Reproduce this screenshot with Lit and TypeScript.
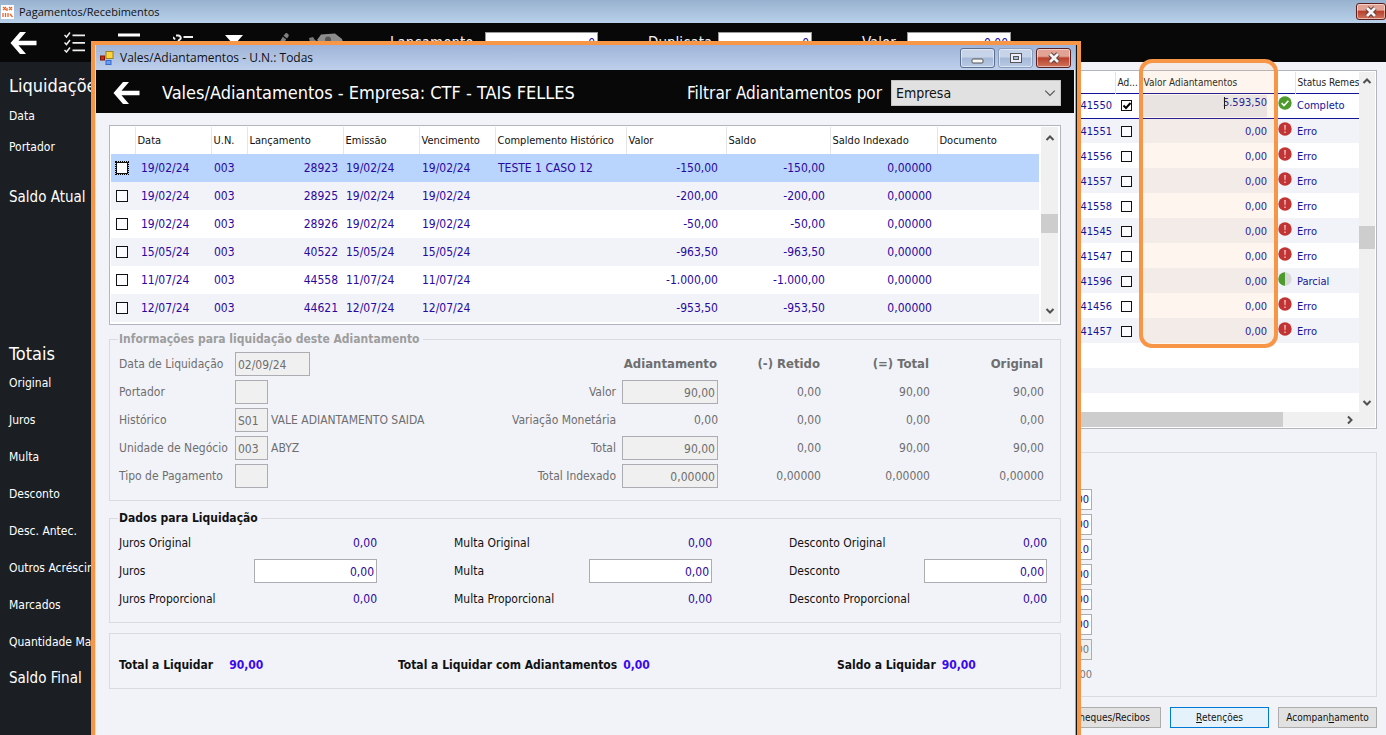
import { LitElement, html, css, svg, nothing } from 'lit';
import { customElement } from 'lit/decorators.js';
import { classMap } from 'lit/directives/class-map.js';

type Advance = {
  date: string; unit: string; entry: string; issued: string; due: string;
  note: string; value: string; balance: string; indexed: string;
};

const adv = (date: string, entry: string, value: string, note = ''): Advance => ({
  date, unit: '003', entry, issued: date, due: date, note, value, balance: value, indexed: '0,00000',
});

const ADVANCES: Advance[] = [
  adv('19/02/24', '28923', '-150,00', 'TESTE 1 CASO 12'),
  adv('19/02/24', '28925', '-200,00'),
  adv('19/02/24', '28926', '-50,00'),
  adv('15/05/24', '40522', '-963,50'),
  adv('11/07/24', '44558', '-1.000,00'),
  adv('12/07/24', '44621', '-953,50'),
];

const TITLES: [string, string, string][] = [
  ['41550', '5.593,50', 'Completo'],
  ['41551', '0,00', 'Erro'],
  ['41556', '0,00', 'Erro'],
  ['41557', '0,00', 'Erro'],
  ['41558', '0,00', 'Erro'],
  ['41545', '0,00', 'Erro'],
  ['41547', '0,00', 'Erro'],
  ['41596', '0,00', 'Parcial'],
  ['41456', '0,00', 'Erro'],
  ['41457', '0,00', 'Erro'],
];

const chevron = (d: string) => html`<svg width="10" height="10" viewBox="0 0 10 10" aria-hidden="true">
  <path d=${d} fill="none" stroke="#505050" stroke-width="2"></path></svg>`;
const UP = 'M1.5 7 L5 3.5 L8.5 7';
const DOWN = 'M1.5 3 L5 6.5 L8.5 3';
const RIGHT = 'M3 1.5 L6.5 5 L3 8.5';

const backArrow = html`<svg width="27" height="22" viewBox="0 0 27 22" aria-hidden="true">
  <path d="M10 0 H16 L8.5 8.7 H26.5 V13.3 H8.5 L16 22 H10 L0.5 11 Z" fill="#fff"></path></svg>`;

const closeGlyph = html`<svg width="14" height="12" viewBox="0 0 14 12" aria-hidden="true">
  <path d="M3 2 L11 10 M11 2 L3 10" stroke="#5b3a3a" stroke-width="4.6"></path>
  <path d="M3 2 L11 10 M11 2 L3 10" stroke="#f4f4f4" stroke-width="2.8"></path></svg>`;

const statusIcon = (s: string) => html`<svg class="status" width="14" height="14" viewBox="0 0 14 14" aria-hidden="true">
  ${s === 'Completo'
    ? svg`<circle cx="7" cy="7" r="6.7" fill="#4f9a2c"></circle><path d="M3.6 7.2 L6 9.5 L10.4 4.8" fill="none" stroke="#fff" stroke-width="1.6"></path>`
    : s === 'Parcial'
      ? svg`<circle cx="7" cy="7" r="6.7" fill="#d8d8d8"></circle><path d="M7 0.3 A6.7 6.7 0 0 0 7 13.7 Z" fill="#4f9a2c"></path>`
      : svg`<circle cx="7" cy="7" r="6.7" fill="#c23434"></circle><path d="M6.2 3 H7.8 L7.5 8.3 H6.5 Z M6.3 9.4 H7.7 V10.9 H6.3 Z" fill="#f0c4c4"></path>`}
</svg>`;

@customElement('app-root')
export class AppRoot extends LitElement {
  static styles = css`
    :host {
      display: flex;
      flex-direction: column;
      position: relative;
      height: 100vh;
      overflow: hidden;
      background: #f2f3f9;
      color: #111;
      font: 12px/16px "DejaVu Sans Condensed", "DejaVu Sans", sans-serif;
    }
    *, *::before { box-sizing: border-box; }
    button, input, select { font: inherit; color: inherit; margin: 0; border-radius: 0; }
    button { padding: 0; cursor: default; }
    svg { display: block; flex: none; }
    input { min-width: 0; }

    .titlebar {
      display: flex;
      align-items: center;
      flex: none;
      height: 23px;
      gap: 5px;
      padding-left: 1px;
      background: linear-gradient(#98b1cf, #b9d1ea);
      font: 11px/16px "Open Sans", "Noto Sans", sans-serif;
    }
    .titlebar .name { flex: 1; }
    .win {
      display: flex;
      align-items: center;
      justify-content: center;
      width: 35px;
      height: 20px;
      border: 1px solid #5b6e8e;
      border-radius: 3px;
      background: linear-gradient(#c6d3e8 45%, #a5b9d8 50%, #b8cae4);
      box-shadow: inset 0 0 0 1px rgba(255, 255, 255, .5);
    }
    .win.faint { border-color: #8a9cbc; }
    .win.close {
      border-color: #5c1f1f;
      background: linear-gradient(#e2a394 40%, #b8412c 50%, #d0735c);
    }
    .titlebar .win.close { width: 30px; height: 17px; }

    .toolbar {
      display: flex;
      flex: none;
      align-items: center;
      height: 39px;
      padding-left: 10px;
      background: #080808;
      color: #f2f2f2;
      font-size: 15px;
    }
    .toolbar button { background: none; border: 0; }
    .icons { display: flex; align-items: center; gap: 32px; width: 326px; margin-left: 27px; }
    .icons .cash { margin-left: -12px; }
    .toolbar label { display: flex; align-items: center; }
    .toolbar label + label { margin-left: 50px; }
    .toolbar input {
      height: 22px;
      padding: 0 2px;
      border: 1px solid #999;
      background: #fff;
      color: #1a08b0;
      font-size: 12px;
      text-align: right;
    }
    .l-entry { width: 95px; }
    .l-dup { width: 70px; }
    .l-val { width: 45px; }
    .w-entry { width: 113px; }
    .w-dup { width: 94px; }
    .w-val { width: 104px; }

    .body { display: flex; flex: 1; min-height: 0; }
    .side {
      flex: none;
      width: 260px;
      padding-left: 9px;
      background: #1b1f24;
      color: #fff;
      white-space: nowrap;
    }
    .side h2 { margin: 0; font-size: 18px; font-weight: 400; line-height: 22px; padding-top: 13px; }
    .side p { margin: 0; font-size: 12px; line-height: 16px; }
    .side .big { font-size: 15px; line-height: 20px; }
    .filters { display: flex; flex-direction: column; height: 268px; }
    .filters p { margin-top: 11px; }
    .filters p + p { margin-top: 15px; }
    .filters p.big { margin-top: 32px; }
    .totals p { margin-top: 21px; }
    .totals h2 + p { margin-top: 10px; }
    .totals p.big { margin-top: 18px; }

    .main {
      position: relative;
      display: flex;
      flex-direction: column;
      flex: 1;
      min-width: 0;
      padding: 8px 9px 0 12px;
      font-size: 11px;
    }
    .gridbox {
      flex: none;
      display: grid;
      grid-template-columns: 1fr 16px;
      grid-template-rows: 340px 15px;
      padding: 1px;
      border: 1px solid #b2b5bd;
      background: #fff;
    }
    .gridbox .view { overflow: hidden; }
    table { width: 100%; border-collapse: collapse; table-layout: fixed; }
    th { text-align: left; font-weight: 400; white-space: nowrap; overflow: hidden; }
    td { white-space: nowrap; }
    .num { text-align: right; }
    .titles { color: #14149b; }
    .titles th { height: 21px; padding: 2px 0 0 2px; color: #222; font-size: 10px; border-left: 1px solid #e3e3e6; }
    .titles td { height: 25px; padding: 2px 3px 0 2px; }
    .titles tr:nth-child(even) td { background: #f2f3f9; }
    .titles tr.current td { background: #fff; padding-top: 0; border-top: 1px solid #14149b; border-bottom: 1px solid #14149b; }
    .titles td.amount { padding-right: 9px; }
    .field { position: relative; display: block; }
    .field::before {
      content: '';
      position: absolute;
      top: 2px;
      right: 42px;
      width: 1px;
      height: 12px;
      background: #111;
    }
    .field input {
      display: block;
      width: 100%;
      height: 22px;
      padding: 0 0 7px;
      border: 0;
      background: #e8ebf2;
      text-align: right;
    }
    .titles .status { margin-top: -6px; }
    input[type='checkbox'] {
      appearance: none;
      display: block;
      width: 12px;
      height: 12px;
      border: 1px solid #111;
      background: #fcfcff;
    }
    input[type='checkbox']:checked {
      background: #fff url("data:image/svg+xml,%3Csvg xmlns='http://www.w3.org/2000/svg' viewBox='0 0 10 10'%3E%3Cpath d='M1.5 4.5 L4 7 L8.5 2' fill='none' stroke='%23000' stroke-width='2'/%3E%3C/svg%3E") center / 10px 10px no-repeat;
    }
    .titles input[type='checkbox'] { width: 11px; height: 11px; margin-left: 4px; }

    .vbar { display: flex; flex-direction: column; align-items: center; background: #f0f0f0; }
    .vbar i { align-self: stretch; background: #cdcdcd; }
    .vbar svg { margin: 4px 0; }
    .main .vbar i { height: 23px; margin-top: 136px; }
    .main .vbar svg:last-child { margin-top: auto; }
    .hbar { display: flex; align-items: center; background: #f0f0f0; }
    .hbar i { align-self: stretch; flex: 1; background: #cdcdcd; margin-right: 62px; }
    .hbar svg { margin-right: 4px; }
    .corner { background: #f0f0f0; }

    .highlight {
      position: absolute;
      top: -3px;
      right: 108px;
      width: 139px;
      height: 289px;
      border: 4px solid #f79646;
      border-radius: 13px;
      background: rgba(247, 150, 70, .09);
      pointer-events: none;
    }

    .amounts {
      flex: none;
      display: flex;
      flex-direction: column;
      align-items: flex-end;
      gap: 4px;
      height: 245px;
      margin-top: 23px;
      padding: 36px 284px 0 0;
      border: 1px solid #d9dbe0;
      color: #14149b;
    }
    .amounts input {
      width: 90px;
      height: 21px;
      padding: 0 2px;
      border: 1px solid #abadb3;
      background: #fff;
      text-align: right;
    }
    .amounts input:disabled { background: #f0f0f0; color: #777; }
    .amounts output { color: #777; line-height: 21px; }
    .actions { display: flex; justify-content: flex-end; gap: 9px; margin-top: 10px; }
    .actions button {
      width: 99px;
      height: 21px;
      border: 1px solid #adadad;
      background: #e1e1e1;
      color: #111;
      font-size: 10px;
      white-space: nowrap;
    }
    .actions .focus { background: #e5f1fb; border-color: #0078d7; }

    .dialog {
      position: absolute;
      display: flex;
      flex-direction: column;
      top: 41px;
      bottom: 0;
      left: 91px;
      right: 305px;
      border: 4px solid #f79646;
      border-bottom: 0;
      background: #f2f3f9;
    }
    .frame {
      display: flex;
      flex-direction: column;
      flex: 1;
      min-height: 0;
      border-left: 1px solid #d5def0;
      border-right: 1px solid #111;
      box-shadow: inset -1px 0 #5cc0e8;
    }
    .frame .titlebar {
      height: 25px;
      margin-right: 1px;
      padding: 0 4px;
      background: linear-gradient(#9fb4d8, #becfec);
      font-size: 12px;
      gap: 3px;
    }
    .frame .titlebar .name { padding-left: 3px; }
    .frame .titlebar .win.close { width: 35px; height: 20px; }
    .head {
      display: flex;
      align-items: center;
      flex: none;
      height: 43px;
      margin-right: 2px;
      padding: 3px 13px 0 17px;
      background: #080808;
      color: #fff;
    }
    .head button { border: 0; background: none; }
    .head h1 { flex: 1; margin: 0 0 0 22px; font-size: 18px; font-weight: 400; line-height: 24px; white-space: nowrap; }
    .head label { font-size: 17px; margin-right: 9px; white-space: nowrap; }
    .head select {
      appearance: none;
      width: 170px;
      height: 26px;
      padding: 0 4px;
      border: 1px solid #c4c4c4;
      background: #e1e1e1 url("data:image/svg+xml,%3Csvg xmlns='http://www.w3.org/2000/svg' viewBox='0 0 10 10'%3E%3Cpath d='M1 3 L5 7 L9 3' fill='none' stroke='%23555'/%3E%3C/svg%3E") right 4px center / 12px 12px no-repeat;
      color: #111;
      font-size: 14px;
    }
    .content { display: flex; flex-direction: column; padding: 12px 15px 0 13px; }
    .advbox {
      display: grid;
      grid-template-columns: 1fr 20px;
      padding: 1px 1px 2px;
      border: 1px solid #b2b5bd;
      background: #fff;
    }
    .adv { color: #2a089f; }
    .adv th { height: 27px; padding: 0 2px; color: #111; font-size: 11px; border-left: 1px solid #e5e5e8; }
    .adv th:first-child { border-left: 0; }
    .adv td { height: 28px; padding: 0 3px; }
    .adv td:first-child { padding-left: 5px; }
    .adv td.date { padding-left: 6px; }
    .adv td.entry { padding-right: 5px; }
    .adv td.value { padding-right: 8px; }
    .adv td.sum { padding-right: 5px; }
    .adv tr:nth-child(even) td { background: #f2f3f9; }
    .adv tr.current td { background: #b9d5fe; }
    .adv .current input { outline: 1px dotted #000; }
    .advbox .vbar { margin: 0 1px 0 2px; }
    .advbox .vbar i { height: 19px; margin-top: 65px; }
    .advbox .vbar svg { margin: 6px 0; }
    .advbox .vbar svg:last-child { margin-top: auto; }

    fieldset { min-width: 0; margin: 0; padding: 0 13px 0 9px; border: 1px solid #d9dbe0; }
    legend { padding: 0 3px 0 1px; margin-left: -1px; font-weight: 700; line-height: 16px; }
    .info {
      display: grid;
      grid-template-columns: auto auto;
      justify-content: space-between;
      height: 170px;
      margin-top: 6px;
      color: #6e6e6e;
    }
    .info legend { color: #9d9d9d; }
    .rows { display: grid; grid-auto-rows: 24px; row-gap: 4px; align-items: center; align-content: start; padding-top: 5px; }
    .keys { grid-template-columns: 113px auto auto; column-gap: 3px; justify-content: start; }
    .keys .span { grid-column: span 2; }
    .rows input {
      width: 100%;
      height: 24px;
      padding: 2px 2px 0;
      border: 1px solid #abadb3;
      background: #fff;
    }
    .rows input:disabled { background: #f0f0f0; color: #6e6e6e; }
    .keys input { width: 33px; }
    .keys .wide { width: 75px; }
    .figures { grid-template-columns: 110px 96px 103px 109px 114px; text-align: right; margin-right: 3px; }
    .figures > :nth-child(5n + 1) { padding-right: 6px; }
    .figures input { text-align: right; }
    .figures strong { font-size: 13px; padding-right: 1px; }

    .settle {
      display: grid;
      grid-template-columns: repeat(3, 1fr);
      column-gap: 77px;
      height: 113px;
      margin-top: 9px;
    }
    .pairs { grid-template-columns: 1fr 123px; color: #111; }
    .pairs output, .pairs input { text-align: right; color: #2a089f; }
    .final {
      display: grid;
      grid-template-columns: 279fr 439fr 214fr;
      align-items: center;
      height: 56px;
      margin-top: 10px;
      padding: 8px 9px 0;
      border: 1px solid #d9dbe0;
      font-weight: 700;
      white-space: nowrap;
    }
    .final output { color: #3a08f0; margin-left: 6px; }
    .final .far output { margin-left: 16px; }
  `;

  render() {
    return html`
      <header class="titlebar">
        <svg width="13" height="14" viewBox="0 0 13 14" aria-hidden="true">
          <rect width="13" height="14" fill="#fff"></rect>
          <path d="M2 2 L5 5 M5 2 L2 5 M8 5 L11 2 M8 2 L11 5 M2 8 V12 M4.5 8 V12 M7 8 V12 M9 9 L11.5 12 M6 3 V6" stroke="#f0642c" stroke-width="1.3"></path>
        </svg>
        <span class="name">Pagamentos/Recebimentos</span>
        <button class="win close" aria-label="Fechar">${closeGlyph}</button>
      </header>
      <div class="toolbar">
        <button aria-label="Voltar">${backArrow}</button>
        <div class="icons">
          <svg width="21" height="21" viewBox="0 0 21 21" aria-hidden="true">
            <path d="M0.5 3 L2.5 5 L6 0.5 M0.5 10.5 L2.5 12.5 L6 8 M0.5 18 L2.5 20 L6 15.5" fill="none" stroke="#eee" stroke-width="1.5"></path>
            <path d="M8.5 3.3 H21 M8.5 10.8 H21 M8.5 18.3 H21" stroke="#eee" stroke-width="1.8"></path>
          </svg>
          <svg width="24" height="20" viewBox="0 0 24 20" aria-hidden="true">
            <path d="M1 2 H23 M1 10 H23 M1 18 H23" stroke="#fff" stroke-width="3"></path>
          </svg>
          <svg width="20" height="18" viewBox="0 0 20 18" aria-hidden="true">
            <path d="M0 3 L2 5.5 M3 1.5 H5.5 Q8.5 2.5 7.5 5 L5 7 M10.5 3 H20 M10.5 9.5 H20 M10.5 15.5 H20" fill="none" stroke="#eee" stroke-width="2"></path>
          </svg>
          <svg width="18" height="18" viewBox="0 0 18 18" aria-hidden="true"><path d="M0 1 H18 L11 9 V18 L7 15 V9 Z" fill="#fff"></path></svg>
          <svg width="14" height="22" viewBox="0 0 14 22" aria-hidden="true">
            <path d="M10 2 Q11 0 13 2 Q14.5 3.5 13 5 L12 6.5 L8.5 3.8 Z M7.8 4.8 L11.2 7.6 L4 18 L0 21 L1 16 Z" fill="#808080"></path>
          </svg>
          <svg class="cash" width="34" height="20" viewBox="0 0 34 20" aria-hidden="true">
            <path d="M12 1.5 L26 0.5 L33 6 L34 9 L27 12 L14 12 L8 7 Z" fill="#8c8c8c"></path>
            <path d="M0 5 L4 4 L6 7 L12 10 L10 14 L1 9 Z" fill="#777"></path>
            <circle cx="19" cy="6.5" r="3" fill="#555"></circle>
          </svg>
        </div>
        <label><span class="l-entry">Lançamento</span><input class="w-entry" value="0"></label>
        <label><span class="l-dup">Duplicata</span><input class="w-dup" value="0"></label>
        <label><span class="l-val">Valor</span><input class="w-val" value="0,00"></label>
      </div>
      <div class="body">
        <aside class="side">
          <section class="filters">
            <h2>Liquidações</h2>
            <p>Data</p>
            <p>Portador</p>
            <p class="big">Saldo Atual</p>
          </section>
          <section class="totals">
            <h2>Totais</h2>
            ${['Original', 'Juros', 'Multa', 'Desconto', 'Desc. Antec.', 'Outros Acréscimos', 'Marcados', 'Quantidade Marcada']
              .map((t) => html`<p>${t}</p>`)}
            <p class="big">Saldo Final</p>
          </section>
        </aside>
        <main class="main">${this.titles()}</main>
      </div>
      <section class="dialog" role="dialog" aria-label="Vales/Adiantamentos">
        <div class="frame">${this.dialog()}</div>
      </section>`;
  }

  private titles() {
    return html`
      <div class="gridbox">
        <div class="view">
          <table class="titles">
            <colgroup><col><col width="98"><col width="26"><col width="135"><col width="19"><col width="64"></colgroup>
            <thead>
              <tr><th></th><th>Lançamento</th><th>Ad...</th><th>Valor Adiantamentos</th><th></th><th>Status Remes</th></tr>
            </thead>
            <tbody>
              ${[...TITLES, null, null, null].map((r, i) => r
                ? html`<tr class=${classMap({ current: i === 0 })}>
                    <td></td>
                    <td class="num">${r[0]}</td>
                    <td><input type="checkbox" aria-label="Adiantamento ${r[0]}" ?checked=${i === 0}></td>
                    <td class="num amount">${i === 0
                      ? html`<span class="field"><input aria-label="Valor Adiantamentos" .value=${r[1]}></span>`
                      : r[1]}</td>
                    <td>${statusIcon(r[2])}</td>
                    <td>${r[2]}</td>
                  </tr>`
                : html`<tr><td colspan="6"></td></tr>`)}
            </tbody>
          </table>
        </div>
        <div class="vbar">${chevron(UP)}<i></i>${chevron(DOWN)}</div>
        <div class="hbar"><i></i>${chevron(RIGHT)}</div>
        <div class="corner"></div>
      </div>
      <div class="highlight"></div>
      <div class="amounts">
        ${['0,00', '0,00', '0,10', '0,00', '0,00', '0,00'].map((v, i) => html`<input aria-label="Valor ${i + 1}" .value=${v}>`)}
        <input aria-label="Total" disabled .value=${'0,00'}>
        <output>0,00</output>
      </div>
      <div class="actions">
        <button>Cheques/Recibos</button>
        <button class="focus"><u>R</u>etenções</button>
        <button>Acompan<u>h</u>amento</button>
      </div>`;
  }

  private figure(label: string, values: string[], editable: boolean) {
    return html`
      <span>${label}</span>
      ${values.map((v, i) => i === 0 && editable
        ? html`<input disabled aria-label=${label} .value=${v}>`
        : html`<output>${v}</output>`)}`;
  }

  private pairs(name: string, id: string) {
    return html`<div class="rows pairs">
      <span>${name} Original</span><output>0,00</output>
      <label for=${id}>${name}</label><input id=${id} .value=${'0,00'}>
      <span>${name} Proporcional</span><output>0,00</output>
    </div>`;
  }

  private key(id: string, label: string, value: string, desc = '', wide = false) {
    return html`<label for=${id}>${label}</label>
      <input id=${id} class=${classMap({ wide, span: !desc })} disabled .value=${value}>
      ${desc ? html`<span>${desc}</span>` : nothing}`;
  }

  private dialog() {
    return html`
      <header class="titlebar">
        <svg width="14" height="14" viewBox="0 0 14 14" aria-hidden="true">
          <rect x="6" y="0.5" width="7" height="7" fill="#f8d63c" stroke="#a08020"></rect>
          <rect x="0.5" y="5" width="4" height="4" fill="#d03018" stroke="#801808"></rect>
          <rect x="6" y="9.5" width="5" height="4" fill="#6a9cf0" stroke="#3868c8"></rect>
        </svg>
        <span class="name">Vales/Adiantamentos - U.N.: Todas</span>
        <button class="win" aria-label="Minimizar">
          <svg width="13" height="12" viewBox="0 0 13 12"><rect x="1" y="7" width="11" height="4" rx="1" fill="#f8f8f8" stroke="#555"></rect></svg>
        </button>
        <button class="win faint" aria-label="Maximizar">
          <svg width="12" height="10" viewBox="0 0 12 10"><rect x="0.5" y="0.5" width="11" height="9" fill="#eef" stroke="#555"></rect><rect x="3.5" y="3.5" width="5" height="3" fill="#a9bcd9" stroke="#555"></rect></svg>
        </button>
        <button class="win close" aria-label="Fechar">${closeGlyph}</button>
      </header>
      <div class="head">
        <button aria-label="Voltar">${backArrow}</button>
        <h1>Vales/Adiantamentos - Empresa: CTF - TAIS FELLES</h1>
        <label for="filter">Filtrar Adiantamentos por</label>
        <select id="filter"><option>Empresa</option></select>
      </div>
      <div class="content">
        <div class="advbox">
          <table class="adv">
            <colgroup>
              <col width="24"><col width="76"><col width="36"><col width="96"><col width="76"><col width="76">
              <col width="131"><col width="100"><col width="104"><col width="107"><col>
            </colgroup>
            <thead>
              <tr>${['', 'Data', 'U.N.', 'Lançamento', 'Emissão', 'Vencimento', 'Complemento Histórico', 'Valor', 'Saldo', 'Saldo Indexado', 'Documento']
                .map((h) => html`<th>${h}</th>`)}</tr>
            </thead>
            <tbody>
              ${ADVANCES.map((a, i) => html`<tr class=${classMap({ current: i === 0 })}>
                <td><input type="checkbox" aria-label="Selecionar ${a.entry}"></td>
                <td class="date">${a.date}</td><td>${a.unit}</td><td class="num entry">${a.entry}</td>
                <td>${a.issued}</td><td>${a.due}</td><td>${a.note}</td>
                <td class="num value">${a.value}</td><td class="num sum">${a.balance}</td>
                <td class="num sum">${a.indexed}</td><td></td>
              </tr>`)}
            </tbody>
          </table>
          <div class="vbar">${chevron(UP)}<i></i>${chevron(DOWN)}</div>
        </div>

        <fieldset class="info">
          <legend>Informações para liquidação deste Adiantamento</legend>
          <div class="rows keys">
            ${this.key('date', 'Data de Liquidação', '02/09/24', '', true)}
            ${this.key('holder', 'Portador', '')}
            ${this.key('history', 'Histórico', 'S01', 'VALE ADIANTAMENTO SAIDA')}
            ${this.key('unit', 'Unidade de Negócio', '003', 'ABYZ')}
            ${this.key('kind', 'Tipo de Pagamento', '')}
          </div>
          <div class="rows figures">
            <span></span><strong>Adiantamento</strong><strong>(-) Retido</strong><strong>(=) Total</strong><strong>Original</strong>
            ${this.figure('Valor', ['90,00', '0,00', '90,00', '90,00'], true)}
            ${this.figure('Variação Monetária', ['0,00', '0,00', '0,00', '0,00'], false)}
            ${this.figure('Total', ['90,00', '0,00', '90,00', '90,00'], true)}
            ${this.figure('Total Indexado', ['0,00000', '0,00000', '0,00000', '0,00000'], true)}
          </div>
        </fieldset>

        <fieldset class="settle">
          <legend>Dados para Liquidação</legend>
          ${this.pairs('Juros', 'interest')}
          ${this.pairs('Multa', 'fine')}
          ${this.pairs('Desconto', 'discount')}
        </fieldset>

        <div class="final">
          <div class="far">Total a Liquidar<output>90,00</output></div>
          <div>Total a Liquidar com Adiantamentos<output>0,00</output></div>
          <div>Saldo a Liquidar<output>90,00</output></div>
        </div>
      </div>`;
  }
}
